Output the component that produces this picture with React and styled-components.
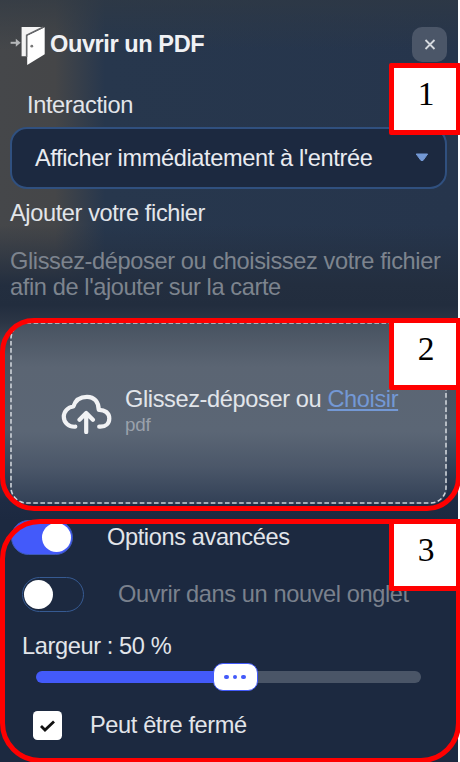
import React from "react";
import styled, { createGlobalStyle } from "styled-components";

const Global = createGlobalStyle`
  *, *::before, *::after { box-sizing: border-box; }
  body { margin: 0; background: #fff; overflow: hidden; }
`;

const Stage = styled.main`
  position: relative;
  width: 460px;
  height: 762px;
  overflow: hidden;
  font-family: "Liberation Sans", Arial, sans-serif;
  font-size: 23.6px;
  letter-spacing: -0.39px;
  line-height: 26px;
  color: #e2e5ea;
`;

const Panel = styled.section`
  width: 458px;
  height: 762px;
  padding: 22px 11px 0 10px;
  display: flex;
  flex-direction: column;
  background:
    linear-gradient(180deg, #303943aa 0, #26344b00 50px),
    linear-gradient(180deg, #26344b00 225px, #232e3f 285px, #222d3e 305px, #2b3545 322px, #48525f 355px, #4a5666 430px, #36455a 460px, #1e2b43 500px, #1c2940 520px),
    linear-gradient(90deg, #45474a 0, #454648 55px, #27374d 105px, #26354c 100%);
`;

const Header = styled.header`
  display: flex;
  align-items: center;
  height: 44px;
`;

const Title = styled.h1`
  flex: 1;
  margin: 0 0 0 3px;
  font-size: 23.6px;
  letter-spacing: -0.44px;
  line-height: 26px;
  font-weight: 700;
  color: #f0f1f4;
`;

const CloseButton = styled.button`
  display: grid;
  place-items: center;
  width: 35px;
  height: 35px;
  padding: 0;
  border: 0;
  border-radius: 10px;
  background: #4b5668;
`;

const FieldLabel = styled.label`
  margin: 26px 0 0 17px;
  height: 35px;
`;

const Select = styled.button`
  display: flex;
  align-items: center;
  justify-content: space-between;
  flex: none;
  height: 62px;
  padding: 0 16px 1px 23px;
  border: 2px solid #30507f;
  border-radius: 17px;
  background: #1c2940;
  color: #e9ebf0;
  font: inherit;
  letter-spacing: inherit;
`;

const SectionTitle = styled.h2`
  margin: 11px 0 0;
  font-size: inherit;
  font-weight: 400;
`;

const Hint = styled.p`
  margin: 23px 0 0;
  color: #7d848e;
  white-space: nowrap;
  line-height: 25.5px;
`;

const DropZone = styled.div`
  position: relative;
  display: flex;
  flex: none;
  align-items: center;
  gap: 12px;
  height: 182px;
  margin-top: 22px;
  padding-left: 51px;
  border-radius: 16px;
  background: linear-gradient(180deg, #475260 0, #5b6573 45px, #5b6675 110px, #4b5769 145px, #334157 180px);
`;

const DashedOutline = styled.svg`
  position: absolute;
  inset: 0;
  width: 100%;
  height: 100%;
`;

const DropText = styled.div`
  display: flex;
  flex-direction: column;
  margin-top: -2px;
`;

const Choose = styled.a`
  color: #7398d5;
  text-decoration: underline;
  text-decoration-thickness: 1.5px;
  text-underline-offset: 2px;
`;

const Format = styled.small`
  font-size: 18.8px;
  letter-spacing: -0.2px;
  color: #9aa1ab;
`;

const OptionRow = styled.div`
  display: flex;
  align-items: center;
  flex: none;
  height: 35px;
  gap: ${(p) => p.$gap}px;
  margin: ${(p) => p.$top}px 0 0 ${(p) => p.$left}px;
  color: ${(p) => (p.$muted ? "#7a818d" : "#e2e5ea")};
`;

const OptionText = styled.span`
  margin-top: -1px;
`;

const Toggle = styled.span`
  display: flex;
  align-items: center;
  justify-content: ${(p) => (p.$on ? "flex-end" : "flex-start")};
  width: 62px;
  height: 35px;
  padding: 1px;
  border: 1.5px solid ${(p) => (p.$on ? "#3d59b5" : "#365a92")};
  border-radius: 18px;
  background: ${(p) => (p.$on ? "#435afa" : "#1c2940")};
  &::after {
    content: "";
    width: 29px;
    height: 29px;
    border-radius: 50%;
    background: #fff;
  }
`;

const WidthLabel = styled.label`
  margin: 21px 0 0 12px;
`;

const Track = styled.div`
  display: flex;
  align-items: center;
  justify-content: center;
  flex: none;
  height: 12px;
  margin: 12px 26px 0 26px;
  padding-left: 13px;
  border-radius: 6px;
  background: linear-gradient(90deg, #435afa 52%, #4a5567 52%);
`;

const Thumb = styled.span`
  display: flex;
  align-items: center;
  justify-content: center;
  gap: 4px;
  width: 45px;
  height: 28px;
  border: 1.5px solid #435afa;
  border-radius: 10px;
  background: #fff;
`;

const Dot = styled.i`
  width: 4.4px;
  height: 4.4px;
  border-radius: 50%;
  background: #435afa;
`;

const Checkbox = styled.span`
  display: grid;
  place-items: center;
  width: 29px;
  height: 29px;
  border-radius: 4.5px;
  background: #fff;
`;

const Callout = styled.div`
  position: absolute;
  top: ${(p) => p.$top}px;
  left: 0;
  width: 461px;
  height: ${(p) => p.$height}px;
  border: 5px solid #f00;
  border-radius: ${(p) => p.$radius}px;
  border-top-right-radius: 0;
`;

const Marker = styled.div`
  position: absolute;
  top: ${(p) => p.$top}px;
  left: 389px;
  width: 72px;
  height: 72px;
  padding: 7px 0 0 2px;
  border: 5px solid #f00;
  border-radius: 2px;
  background: #fff;
  color: #000;
  text-align: center;
  font: 33.5px/38px "Liberation Serif", "Times New Roman", serif;
`;

const DoorIcon = () => (
  <svg width="37" height="42" viewBox="0 0 37 42">
    <path d="M.6 19.8h7" stroke="#b5b7b9" strokeWidth="2" />
    <path d="M5.8 15.8 10.6 19.8 5.8 23.8Z" fill="#b5b7b9" />
    <path d="M11.6 4H33L17 12v21.3h-5.4z" fill="#f4f4f4" />
    <path d="M17.2 12.8 34.7 4.2v27L17.2 42z" fill="#fff" />
    <path d="M16.6 34V12.2L33.4 4" fill="none" stroke="#66686b" strokeWidth="1.5" />
    <circle cx="21.8" cy="23.2" r="1.4" fill="#777" />
  </svg>
);

const CloudIcon = () => (
  <svg width="52" height="42" viewBox="0 -1.5 52 42" fill="none" stroke="#f1f2f4" strokeWidth="4.2" strokeLinecap="round" strokeLinejoin="round">
    <path d="M14.3 33.2C7.5 33.7 2.8 28.8 2.8 23.3c0-5.3 4.2-9.7 9.6-10.3C14.5 6.2 20 3.3 26 3.3c7.5 0 11.7 5.5 11.7 13 6.1-.2 10.6 3.2 10.6 8.6 0 5-3.8 8.3-8.8 8.3h-1.3" />
    <path d="M25.2 38.6V20.5M18.5 26.2l6.7-6.7 6.7 6.7" />
  </svg>
);

export default function App() {
  return (
    <>
      <Global />
      <Stage>
        <Panel>
          <Header>
            <DoorIcon />
            <Title>Ouvrir un PDF</Title>
            <CloseButton aria-label="Fermer">
              <svg width="12" height="12" viewBox="0 0 12 12"><path d="m1.5 2 9 9m0-9-9 9" stroke="#d5d9df" strokeWidth="1.8" /></svg>
            </CloseButton>
          </Header>
          <FieldLabel>Interaction</FieldLabel>
          <Select>
            <span>Afficher immédiatement à l'entrée</span>
            <svg width="14" height="9" viewBox="0 0 14 9"><path d="M1.2 1h11.4L8 7.5H6z" fill="#7398d5" stroke="#7398d5" strokeLinejoin="round" /></svg>
          </Select>
          <SectionTitle>Ajouter votre fichier</SectionTitle>
          <Hint>Glissez-déposer ou choisissez votre fichier<br />afin de l'ajouter sur la carte</Hint>
          <DropZone>
            <DashedOutline viewBox="0 0 437 182">
              <rect x="1" y="1" width="435" height="180" rx="15.5" fill="none" stroke="#ccd1d8" strokeWidth="1.6" strokeDasharray="4.6 2.5" />
            </DashedOutline>
            <CloudIcon />
            <DropText>
              <span>Glissez-déposer ou <Choose>Choisir</Choose></span>
              <Format>pdf</Format>
            </DropText>
          </DropZone>
          <OptionRow $top={16} $left={1} $gap={34}>
            <Toggle $on /><OptionText>Options avancées</OptionText>
          </OptionRow>
          <OptionRow $top={22} $left={12} $gap={34} $muted>
            <Toggle /><OptionText>Ouvrir dans un nouvel onglet</OptionText>
          </OptionRow>
          <WidthLabel>Largeur : 50 %</WidthLabel>
          <Track><Thumb><Dot /><Dot /><Dot /></Thumb></Track>
          <OptionRow $top={25} $left={23} $gap={28}>
            <Checkbox>
              <svg width="17" height="14" viewBox="0 0 17 14"><path d="m2 7 4 4L15 2.5" fill="none" stroke="#111" strokeWidth="2.8" /></svg>
            </Checkbox>
            <OptionText>Peut être fermé</OptionText>
          </OptionRow>
        </Panel>
        <Callout $top={318} $height={193} $radius={34} />
        <Callout $top={519} $height={244} $radius={40} />
        <Marker $top={63}>1</Marker>
        <Marker $top={318}>2</Marker>
        <Marker $top={519}>3</Marker>
      </Stage>
    </>
  );
}
